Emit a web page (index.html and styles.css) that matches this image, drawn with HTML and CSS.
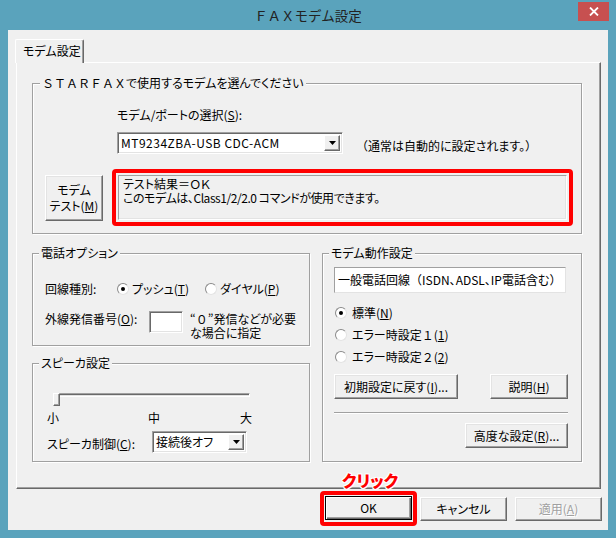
FILE: index.html
```html
<!DOCTYPE html>
<html lang="ja">
<head>
<meta charset="utf-8">
<title>ＦＡＸモデム設定</title>
<link rel="stylesheet" href="styles.css">
</head>
<body>
<div class="window">
  <div class="titlebar">
    <div class="title">ＦＡＸモデム設定</div>
    <div class="close">
      <svg width="10" height="9" viewBox="0 0 10 9"><path d="M1 0.5 L9 8.5 M9 0.5 L1 8.5" stroke="#fff" stroke-width="1.8" fill="none"/></svg>
    </div>
  </div>
  <div class="client">
    <div class="tabs"><div class="tab">モデム設定</div></div>
    <div class="page">
      <div class="group g-port">
        <div class="legend"><span class="fw">ＳＴＡＲＦＡＸ</span>で使用するモデムを選んでください</div>
        <div class="port-label">モデム/ポートの選択(<u>S</u>):</div>
        <div class="port-row">
          <div class="combo port-combo">
            <span class="combo-text wide">MT9234ZBA-USB CDC-ACM</span>
            <span class="combo-btn"><svg width="7" height="4" viewBox="0 0 7 4"><path d="M0 0 H7 L3.5 4 Z" fill="#000"/></svg></span>
          </div>
          <div class="note"><span class="fw">（</span>通常は自動的に設定されます。<span class="fw">）</span></div>
        </div>
        <div class="test-row">
          <div class="btn test-btn"><span>モデム<br>テスト(<u>M</u>)</span></div>
          <div class="highlight">
            <div class="result"><div class="result-line">テスト結果＝ＯＫ</div><div class="result-line tight">このモデムは、Class1/2/2.0 コマンドが使用できます。</div></div>
          </div>
        </div>
      </div>
      <div class="grid">
        <div class="group g-phone">
          <div class="legend">電話オプション</div>
          <div class="line-row">
            <span class="lbl lbl-line">回線種別:</span>
            <span class="radio-item r-push"><span class="radio checked"></span><span>プッシュ(<u>T</u>)</span></span>
            <span class="radio-item"><span class="radio"></span><span>ダイヤル(<u>P</u>)</span></span>
          </div>
          <div class="prefix-row">
            <span class="lbl lbl-prefix">外線発信番号(<u>O</u>):</span>
            <span class="input prefix-input"></span>
            <span class="prefix-note"><span class="note-line"><span class="fw">“０”</span>発信などが必要</span><span class="note-line">な場合に指定</span></span>
          </div>
        </div>
        <div class="group g-modem">
          <div class="legend">モデム動作設定</div>
          <div class="textbox">一般電話回線<span class="fw">（</span>ISDN、ADSL、IP電話含む<span class="fw">）</span></div>
          <div class="radios">
            <div class="radio-row"><span class="radio checked"></span><span>標準(<u>N</u>)</span></div>
            <div class="radio-row"><span class="radio"></span><span>エラー時設定<span class="fw">１</span>(<u>1</u>)</span></div>
            <div class="radio-row"><span class="radio"></span><span>エラー時設定<span class="fw">２</span>(<u>2</u>)</span></div>
          </div>
          <div class="btn-row">
            <div class="btn btn-reset"><span>初期設定に戻す(<u>I</u>)...</span></div>
            <div class="btn btn-help"><span>説明(<u>H</u>)</span></div>
          </div>
          <div class="separator"></div>
          <div class="btn-row right">
            <div class="btn btn-adv"><span>高度な設定(<u>R</u>)...</span></div>
          </div>
        </div>
        <div class="group g-speaker">
          <div class="legend">スピーカ設定</div>
          <div class="slider">
            <div class="track"></div>
            <div class="thumb"></div>
          </div>
          <div class="ticks"><span class="t1">小</span><span class="t2">中</span><span class="t3">大</span></div>
          <div class="spk-row">
            <span class="lbl lbl-spk">スピーカ制御(<u>C</u>):</span>
            <div class="combo spk-combo">
              <span class="combo-text">接続後オフ</span>
              <span class="combo-btn"><svg width="7" height="4" viewBox="0 0 7 4"><path d="M0 0 H7 L3.5 4 Z" fill="#000"/></svg></span>
            </div>
          </div>
        </div>
      </div>
    </div>
    <div class="actions">
      <div class="ok-mark"><div class="btn btn-default"><span>OK</span></div></div>
      <div class="btn btn-action"><span>キャンセル</span></div>
      <div class="btn btn-action disabled"><span>適用(<u>A</u>)</span></div>
    </div>
  </div>
  <div class="annotation">クリック</div>
</div>
</body>
</html>
```
FILE: styles.css
```css
* { box-sizing: border-box; }
html, body { margin: 0; padding: 0; }
body {
  font-family: "Noto Sans CJK JP", "Noto Sans", sans-serif;
  font-size: 12px;
  line-height: 16px;
  color: #000;
  background: #5aa3bc;
  font-feature-settings: "palt";
}
u { text-decoration: underline; text-underline-offset: 1px; }
.fw { font-feature-settings: normal; }

.window {
  width: 616px;
  height: 538px;
  background: #5aa3bc;
  display: flex;
  flex-direction: column;
  position: relative;
}

.titlebar {
  height: 30px;
  display: grid;
  grid-template-columns: 1fr auto 1fr;
}
.title {
  grid-column: 2;
  font-size: 13.5px;
  line-height: 31px;
  color: #222;
  font-feature-settings: normal;
}
.close {
  grid-column: 3;
  justify-self: end;
  align-self: start;
  margin: 2px 7px 0 0;
  width: 31px;
  height: 19px;
  background: #c75050;
  display: flex;
  align-items: center;
  justify-content: center;
}

.client {
  flex: 1;
  margin: 0 8px 8px 8px;
  background: #f0f0f0;
  padding-top: 9px;
  display: flex;
  flex-direction: column;
}

.tabs { display: flex; padding-left: 7px; height: 23px; }
.tab {
  position: relative;
  z-index: 1;
  width: 69px;
  height: 24px;
  background: #f0f0f0;
  border-top: 1px solid #fff;
  border-left: 1px solid #fff;
  border-right: 1px solid #696969;
  box-shadow: inset -1px 0 0 #a0a0a0;
  border-radius: 2px 2px 0 0;
  padding: 3px 0 0 7px;
  line-height: 16px;
}

.page {
  margin: 0 7px 0 8px;
  height: 427px;
  border: 1px solid;
  border-color: #fff #696969 #696969 #fff;
  box-shadow: inset -1px -1px 0 #a0a0a0;
  padding: 20px 18px 0 15px;
}

.group {
  border: 1px solid #a0a0a0;
  box-shadow: inset 1px 1px 0 #fff, 1px 1px 0 #fff;
}
.legend {
  display: inline-block;
  margin: -9px 0 0 6px;
  padding: 0 2px;
  background: #f0f0f0;
  line-height: 16px;
  vertical-align: top;
}

/* group 1 */
.g-port { height: 151px; padding-left: 12px; display: flex; flex-direction: column; align-items: flex-start; }
.g-port .legend { margin-left: -5px; }
.port-label { margin: 16px 0 0 72px; }
.port-row { display: flex; align-items: flex-start; margin: 9px 0 0 72px; }
.combo {
  display: flex;
  align-items: stretch;
  height: 22px;
  background: #fff;
  border: 1px solid;
  border-color: #a0a0a0 #fff #fff #a0a0a0;
  box-shadow: inset 1px 1px 0 #696969, inset -1px -1px 0 #e3e3e3;
  padding: 2px;
}
.combo-text { flex: 1; line-height: 16px; padding-left: 1px; white-space: nowrap; overflow: hidden; }
.combo-text.wide { letter-spacing: 0.5px; }
.combo-btn {
  width: 16px;
  background: #f0f0f0;
  border: 1px solid;
  border-color: #fff #696969 #696969 #fff;
  box-shadow: inset -1px -1px 0 #a0a0a0;
  display: flex;
  align-items: center;
  justify-content: center;
}
.port-combo { width: 226px; }
.note { margin: 6px 0 0 13px; }

.test-row { display: flex; align-items: center; margin-top: 15px; }
.btn {
  background: #f0f0f0;
  border: 1px solid;
  border-color: #fff #696969 #696969 #fff;
  box-shadow: inset -1px -1px 0 #a0a0a0, inset 1px 1px 0 #e3e3e3;
  display: flex;
  align-items: center;
  justify-content: center;
  text-align: center;
  line-height: 16px;
  white-space: nowrap;
}
.test-btn { width: 58px; height: 46px; }
.highlight {
  margin-left: 9px;
  border: 4px solid #f00;
  border-radius: 4px;
  padding: 2px;
}
.result {
  width: 449px;
  height: 45px;
  border: 1px solid;
  border-color: #a0a0a0 #fff #fff #a0a0a0;
  box-shadow: inset -1px -1px 0 #e3e3e3;
  padding: 1px 0 0 4px;
}
.result-line { height: 14px; line-height: 14px; white-space: nowrap; }
.result-line.tight { letter-spacing: -0.45px; }

/* lower grid */
.grid {
  margin-top: 19px;
  display: grid;
  grid-template-columns: 278px 260px;
  grid-template-rows: 93px 99px;
  column-gap: 12px;
  row-gap: 17px;
}
.g-phone { grid-column: 1; grid-row: 1; }
.g-modem { grid-column: 2; grid-row: 1 / 3; }
.g-speaker { grid-column: 1; grid-row: 2; }

.lbl { display: inline-block; }
.line-row { display: flex; align-items: center; margin: 11px 0 0 12px; }
.lbl-line { width: 72px; }
.radio-item { display: inline-flex; align-items: center; }
.r-push { width: 88px; }
.radio {
  display: inline-flex;
  align-items: center;
  justify-content: center;
  flex: none;
  width: 12px;
  height: 12px;
  margin-right: 3px;
  border-radius: 50%;
  background: #fff;
  border: 1px solid;
  border-color: #8a8a8a #e3e3e3 #e3e3e3 #8a8a8a;
}
.radio.checked::after {
  content: "";
  width: 4px;
  height: 4px;
  border-radius: 50%;
  background: #000;
}

.prefix-row { display: flex; align-items: flex-start; margin: 14px 0 0 12px; }
.lbl-prefix { width: 104px; margin-top: 0; }
.input {
  display: inline-block;
  background: #fff;
  border: 1px solid;
  border-color: #a0a0a0 #fff #fff #a0a0a0;
  box-shadow: inset 1px 1px 0 #696969, inset -1px -1px 0 #e3e3e3;
}
.prefix-input { width: 34px; height: 22px; }
.prefix-note { margin: 1px 0 0 7px; display: flex; flex-direction: column; }
.note-line { display: block; height: 14px; line-height: 14px; white-space: nowrap; }

/* modem group */
.g-modem { display: flex; flex-direction: column; align-items: flex-start; }
.textbox {
  margin: 6px 0 0 11px;
  width: 232px;
  height: 26px;
  background: #fff;
  border: 1px solid;
  border-color: #a0a0a0 #e3e3e3 #e3e3e3 #a0a0a0;
  padding-left: 3px;
  line-height: 24px;
  white-space: nowrap;
  overflow: hidden;
}
.radios { margin: 9px 0 0 12px; }
.radio-row { display: flex; align-items: center; height: 22px; line-height: 22px; }
.radio-row .radio { margin-right: 5px; }
.btn-row { display: flex; justify-content: space-between; width: 234px; margin: 6px 0 0 11px; }
.btn-row.right { justify-content: flex-end; margin-top: 9px; }
.btn-reset { width: 124px; height: 25px; }
.btn-help { width: 78px; height: 25px; }
.btn-adv { width: 103px; height: 25px; }
.separator {
  margin: 13px 0 0 11px;
  width: 234px;
  height: 2px;
  border-top: 1px solid #a0a0a0;
  border-bottom: 1px solid #fff;
}

/* speaker group */
.slider { position: relative; margin: 13px 0 0 20px; width: 197px; height: 13px; }
.track {
  margin-top: 4px;
  height: 4px;
  border: 1px solid;
  border-color: #a0a0a0 #fff #fff #a0a0a0;
  background: #696969;
  box-shadow: inset 0 -1px 0 #e3e3e3;
}
.thumb {
  position: absolute;
  left: 0;
  top: 0;
  width: 7px;
  height: 13px;
  background: #f0f0f0;
  border: 1px solid;
  border-color: #fff #696969 #696969 #fff;
  box-shadow: inset -1px -1px 0 #a0a0a0;
}
.ticks { display: flex; margin: 4px 0 0 14px; }
.t1 { width: 101px; }
.t2 { width: 92px; }
.spk-row { display: flex; align-items: flex-start; margin: 5px 0 0 14px; }
.lbl-spk { width: 105px; margin-top: 5px; }
.spk-combo { width: 95px; }

/* bottom */
.actions {
  display: flex;
  justify-content: flex-end;
  gap: 8px;
  margin: 8px 6px 0 0;
}
.btn-action, .btn-default { width: 87px; height: 24px; }
.btn-default {
  border: 1px solid #000;
  box-shadow: inset 1px 1px 0 #fff, inset -1px -1px 0 #696969, inset -2px -2px 0 #a0a0a0;
}
.ok-mark {
  margin: -6px -5px -5px -5px;
  border: 4px solid #f00;
  border-radius: 4px;
  padding: 1px;
}
.disabled { color: #a0a0a0; text-shadow: 1px 1px 0 #fff; }

.annotation {
  position: absolute;
  left: 342px;
  top: 469px;
  color: #f00;
  font-size: 16px;
  font-weight: 900;
  line-height: 22px;
  text-shadow: 1px 0 0 #fff, -1px 0 0 #fff, 0 1px 0 #fff, 0 -1px 0 #fff, 1px 1px 0 #fff, -1px -1px 0 #fff, 1px -1px 0 #fff, -1px 1px 0 #fff;
}
```
